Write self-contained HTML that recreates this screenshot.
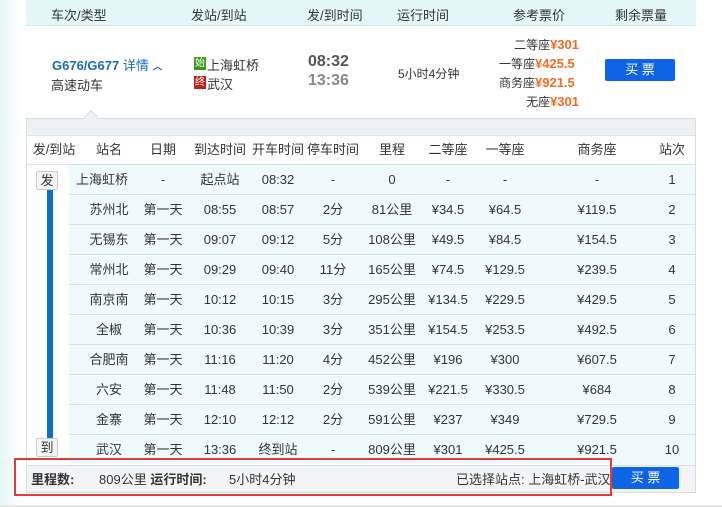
<!DOCTYPE html>
<html><head><meta charset="utf-8"><style>
body{margin:0;width:722px;height:507px;position:relative;overflow:hidden;background:#fff;font-family:"Liberation Sans","Noto Sans CJK SC",sans-serif;font-size:12px;color:#333}
.a{position:absolute;white-space:nowrap}
.c{position:absolute;transform:translateX(-50%);white-space:nowrap;line-height:30px;height:30px}
.o{color:#f06c1f;font-weight:bold;font-size:13px}
</style></head><body>
<div class="a" style="left:0;top:0;width:22px;height:507px;background:linear-gradient(90deg,#e6f7f7,#fff)"></div>
<div class="a" style="left:26px;top:0;width:670px;height:25px;background:#e3f7f9;border-bottom:1px solid #cfe7ea"></div>
<div class="a" style="left:51px;top:5px;font-size:13px">车次/类型</div>
<div class="a" style="left:191px;top:5px;font-size:13px">发站/到站</div>
<div class="a" style="left:307px;top:5px;font-size:13px">发/到时间</div>
<div class="a" style="left:397px;top:5px;font-size:13px">运行时间</div>
<div class="a" style="left:513px;top:5px;font-size:13px">参考票价</div>
<div class="a" style="left:615px;top:5px;font-size:13px">剩余票量</div>

<div class="a" style="left:52px;top:55px;color:#1a6bb5;font-weight:bold;font-size:13px">G676/G677 <span style="font-weight:normal">详情</span> <span style="font-size:10px">︿</span></div>
<div class="a" style="left:51px;top:75px;font-size:13px">高速动车</div>
<div class="a" style="left:194px;top:57px;width:12px;height:13px;background:#3a9a1d;color:#fff;font-size:10px;line-height:13px;text-align:center">始</div>
<div class="a" style="left:207px;top:55px;font-size:13px">上海虹桥</div>
<div class="a" style="left:194px;top:76px;width:12px;height:13px;background:#b7221d;color:#fff;font-size:10px;line-height:13px;text-align:center">终</div>
<div class="a" style="left:207px;top:74px;font-size:13px">武汉</div>
<div class="a" style="left:308px;top:53px;font-weight:bold;font-size:16px;color:#555">08:32</div>
<div class="a" style="left:308px;top:72px;font-weight:bold;font-size:16px;color:#888">13:36</div>
<div class="a" style="left:398px;top:65px">5小时4分钟</div>
<div class="a" style="right:143px;top:36px">二等座<span class="o">¥301</span></div>
<div class="a" style="left:499px;top:55px">一等座<span class="o">¥425.5</span></div>
<div class="a" style="left:499px;top:74px">商务座<span class="o">¥921.5</span></div>
<div class="a" style="right:143px;top:93px">无座<span class="o">¥301</span></div>
<div class="a" style="left:605px;top:59px;width:70px;height:22px;background:#0f64e6;border-radius:2px;color:#fff;text-align:center;line-height:22px;font-size:13px">买 票</div>

<div class="a" style="left:26px;top:118px;width:668px;height:373px;border:1px solid #d8dde0;background:#fff"></div>
<div class="a" style="left:27px;top:119px;width:668px;height:16px;background:#eef1f4;border-bottom:1px solid #dde2e5"></div>
<div class="a" style="left:86px;top:112px;width:9px;height:9px;background:#eef1f4;border-left:1px solid #d8dde0;border-top:1px solid #d8dde0;transform:rotate(45deg)"></div>
<div class="a" style="left:27px;top:164px;width:668px;height:1px;background:#d8e2e5"></div>
<div class="a" style="left:69px;top:165px;width:626px;height:300px;background:#eefafb"></div>
<div id="rows"></div>
<div class="a" style="left:47px;top:188px;width:6px;height:250px;background:#0b71c6"></div>
<div class="a" style="left:36px;top:171px;width:20px;height:17px;background:#f4f4f4;border:1px solid #ccc;border-radius:2px;text-align:center;line-height:17px;font-size:13px">发</div>
<div class="a" style="left:36px;top:438px;width:20px;height:17px;background:#f4f4f4;border:1px solid #ccc;border-radius:2px;text-align:center;line-height:17px;font-size:13px">到</div>
<div class="a" style="left:27px;top:465px;width:668px;height:26px;background:#f2f4f6;border-top:1px solid #dde"></div>
<div class="a" style="left:14px;top:458px;width:594px;height:34px;border:2px solid #e23b3b"></div>
<div class="a" style="left:31px;top:469px;font-weight:bold;font-size:13px">里程数:</div>
<div class="a" style="left:99px;top:469px;font-size:13px">809公里 <b>运行时间:</b></div>
<div class="a" style="left:229px;top:469px;font-size:13px">5小时4分钟</div>
<div class="a" style="left:456px;top:469px;font-size:13px">已选择站点: 上海虹桥-武汉</div>
<div class="a" style="left:612px;top:467px;width:67px;height:22px;background:#0f64e6;border-radius:2px;color:#fff;text-align:center;line-height:22px;font-size:13px">买 票</div>
<div class="a" style="left:0;top:505px;width:722px;height:2px;background:#e6e6e6"></div>
<script>
var h=[["发/到站",54],["站名",109],["日期",163],["到达时间",220],["开车时间",278],["停车时间",333],["里程",392],["二等座",448],["一等座",505],["商务座",597],["站次",672]];
var d=[["上海虹桥","-","起点站","08:32","-","0","-","-","-","1"],
["苏州北","第一天","08:55","08:57","2分","81公里","¥34.5","¥64.5","¥119.5","2"],
["无锡东","第一天","09:07","09:12","5分","108公里","¥49.5","¥84.5","¥154.5","3"],
["常州北","第一天","09:29","09:40","11分","165公里","¥74.5","¥129.5","¥239.5","4"],
["南京南","第一天","10:12","10:15","3分","295公里","¥134.5","¥229.5","¥429.5","5"],
["全椒","第一天","10:36","10:39","3分","351公里","¥154.5","¥253.5","¥492.5","6"],
["合肥南","第一天","11:16","11:20","4分","452公里","¥196","¥300","¥607.5","7"],
["六安","第一天","11:48","11:50","2分","539公里","¥221.5","¥330.5","¥684","8"],
["金寨","第一天","12:10","12:12","2分","591公里","¥237","¥349","¥729.5","9"],
["武汉","第一天","13:36","终到站","-","809公里","¥301","¥425.5","¥921.5","10"]];
var s="";
h.forEach(function(x){s+='<div class="c" style="left:'+x[1]+'px;top:135px;font-size:13px">'+x[0]+'</div>';});
d.forEach(function(r,i){var y=165+i*30;
 if(i>0)s+='<div class="a" style="left:69px;top:'+(y-1)+'px;width:626px;height:1px;background:#d5e3e6"></div>';
 r.forEach(function(t,j){var x=h[j+1][1];if(j==0&&i==0)x=102;s+='<div class="c" style="left:'+x+'px;top:'+y+'px;font-size:13px">'+t+'</div>';});});
document.getElementById("rows").outerHTML=s;
</script>
</body></html>
